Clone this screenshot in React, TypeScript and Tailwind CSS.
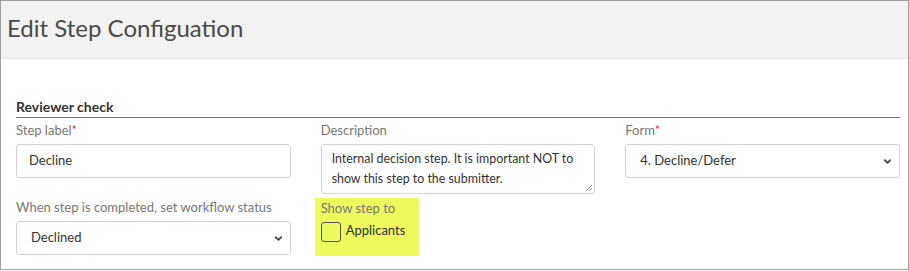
import { ChevronDown } from "lucide-react";

const labelCls = "block text-[13px] leading-[17px] text-[#777] mb-[5px]";
const fieldCls =
  "w-full h-[34px] rounded-[3px] border border-[#cfd3d7] bg-white text-[13px] text-[#333] px-[12px] outline-none";

const Req = () => <span className="text-[#e53935]">*</span>;

const SelectBox = ({ value }: { value: string }) => (
  <div className="relative">
    <div className={`${fieldCls} flex items-center pl-[14px]`}>{value}</div>
    <ChevronDown
      className="absolute right-[7px] top-[12px] h-[11px] w-[11px] text-[#444]"
      strokeWidth={4}
    />
  </div>
);

export default function App() {
  return (
    <div
      className="w-[909px] h-[270px] border border-[#a0a0a0] bg-white overflow-hidden"
      style={{ fontFamily: "Lato, 'Liberation Sans', sans-serif" }}
    >
      {/* Header */}
      <div className="h-[58px] bg-[#f2f2f2] border-b border-[#e6e6e6] pl-[6px] pt-[12px]">
        <h1 className="text-[24px] leading-[30px] text-[#4a4a4a]">Edit Step Configuation</h1>
      </div>

      <div className="pl-[15px] pr-[8px] pt-[40px]">
        <div className="text-[14px] font-bold text-[#333] leading-[16px] pb-[2px] border-b border-[#777]">
          Reviewer check
        </div>

        <div className="grid grid-cols-3 gap-x-[30px] pt-[4px]">
          <div>
            <label className={labelCls}>
              Step label<Req />
            </label>
            <div className={`${fieldCls} flex items-center`}>Decline</div>
          </div>
          <div>
            <label className={labelCls}>Description</label>
            <div className="relative h-[50px] rounded-[3px] border border-[#cfd3d7] pl-[10px] pr-[6px] pt-[4px] text-[12.4px] leading-[20px] text-[#333]">
              Internal decision step. It is important NOT to show this step to the submitter.
              <svg className="absolute right-[1px] bottom-[1px]" width="8" height="8" viewBox="0 0 8 8">
                <path d="M7 1L1 7M7 4L4 7" stroke="#888" strokeWidth="1" />
              </svg>
            </div>
          </div>
          <div>
            <label className={labelCls}>
              Form<Req />
            </label>
            <SelectBox value="4. Decline/Defer" />
          </div>
        </div>

        <div className="grid grid-cols-3 gap-x-[30px] pt-[4px]">
          <div className="pt-[1px]">
            <label className={`${labelCls} mb-[3px]`}>When step is completed, set workflow status</label>
            <SelectBox value="Declined" />
          </div>
          <div>
            <div className="w-[104px] h-[58px] -ml-[6px] bg-[#edfa5c] pl-[6px] pt-[2px]">
              <div className="text-[13px] leading-[17px] text-[#777]">Show step to</div>
              <div className="flex items-center gap-[5px] mt-[5px]">
                <span className="w-[20px] h-[20px] rounded-[3px] border border-[#555]" />
                <span className="text-[13px] text-[#333] -mt-[2px]">Applicants</span>
              </div>
            </div>
          </div>
          <div />
        </div>
      </div>
    </div>
  );
}
